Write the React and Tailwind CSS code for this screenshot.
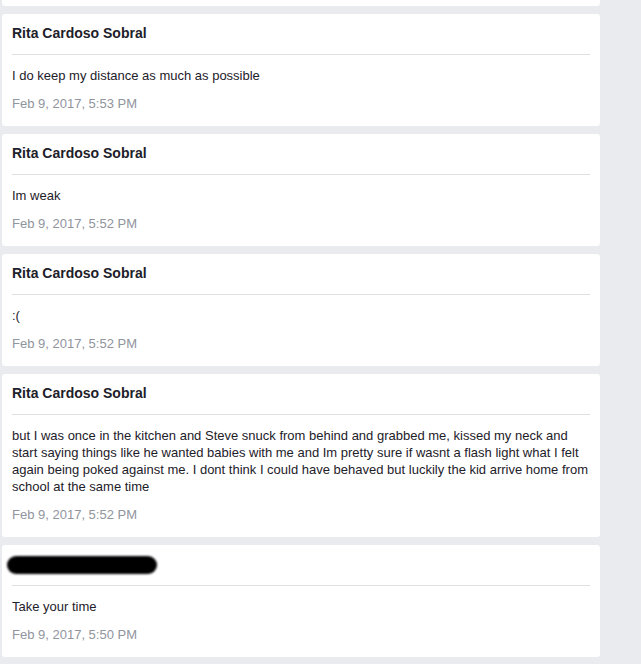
import React from 'react';

const messages = [
  { name: 'Rita Cardoso Sobral', text: 'I do keep my distance as much as possible', date: 'Feb 9, 2017, 5:53 PM' },
  { name: 'Rita Cardoso Sobral', text: 'Im weak', date: 'Feb 9, 2017, 5:52 PM' },
  { name: 'Rita Cardoso Sobral', text: ':(', date: 'Feb 9, 2017, 5:52 PM' },
  {
    name: 'Rita Cardoso Sobral',
    text: 'but I was once in the kitchen and Steve snuck from behind and grabbed me, kissed my neck and start saying things like he wanted babies with me and Im pretty sure if wasnt a flash light what I felt again being poked against me. I dont think I could have behaved but luckily the kid arrive home from school at the same time',
    date: 'Feb 9, 2017, 5:52 PM',
  },
  { name: null, text: 'Take your time', date: 'Feb 9, 2017, 5:50 PM' },
];

const MessageCard = ({ name, text, date }) => (
  <div className="bg-white rounded-[3px] px-[10px] pt-[10px] pb-[14px]">
    {name ? (
      <div className="h-[18px] text-[14px] leading-[18px] font-bold text-[#1d2129]">{name}</div>
    ) : (
      <div className="h-[18px] relative">
        {/* redacted name */}
        <div className="absolute -left-[5px] top-[1px] w-[150px] h-[18px] rounded-full bg-black blur-[0.8px]" />
      </div>
    )}
    <div className="mt-[12px] border-t border-[#dddfe2]" />
    <div className="mt-[12px] text-[13px] leading-[17px] text-[#1d2129]">{text}</div>
    <div className="mt-[11px] text-[13px] leading-[17px] text-[#90949c]">{date}</div>
  </div>
);

export default function App() {
  return (
    <div className="min-h-[664px] bg-[#e9ebee] pl-[2px] pr-[41px]" style={{ fontFamily: '"Liberation Sans", Arial, sans-serif' }}>
      <div className="flex flex-col gap-[8px] pb-[8px]">
        <div className="h-[6px] bg-white rounded-b-[3px]" />
        {messages.map((m, i) => (
          <MessageCard key={i} {...m} />
        ))}
      </div>
    </div>
  );
}
